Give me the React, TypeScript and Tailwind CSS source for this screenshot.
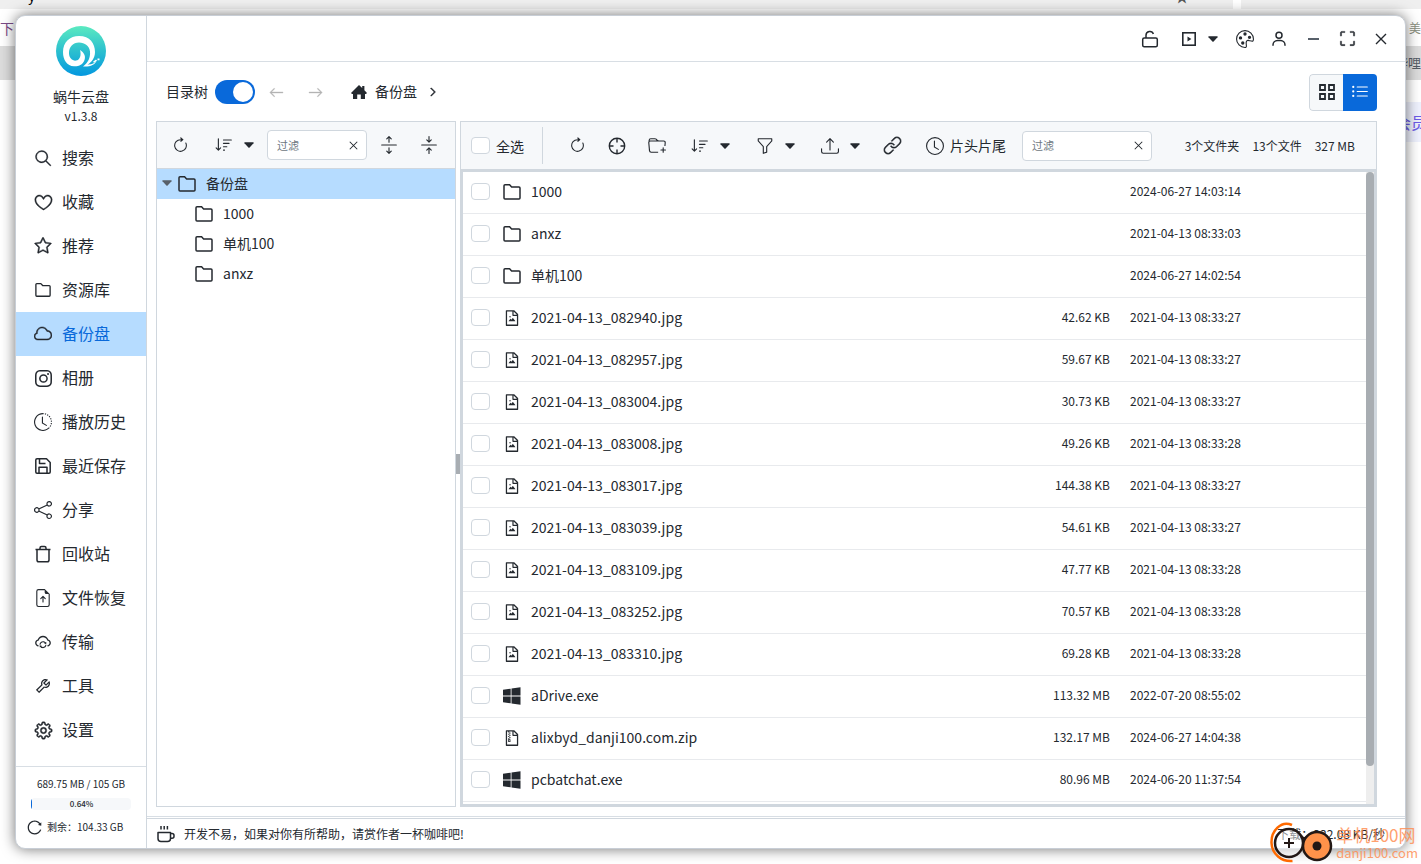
import { useState } from "react";
import type { ReactNode } from "react";
import {
  BsArrowClockwise, BsArrowLeft, BsArrowRight, BsArrowsCollapse, BsArrowsExpand,
  BsChevronRight, BsClock, BsClockHistory, BsFileEarmarkArrowUp, BsFolderPlus,
  BsFunnel, BsInstagram, BsListUl, BsPalette, BsShare, BsSortDown, BsUpload,
} from "react-icons/bs";
import { GoCloud, GoGear, GoHeart, GoLink, GoScreenFull, GoSearch, GoStar } from "react-icons/go";
import { BiUser } from "react-icons/bi";
import {
  AiOutlineCloudSync, AiOutlineFileImage, AiOutlineFileZip, AiOutlineReload, AiOutlineTool,
} from "react-icons/ai";

function LineIcon({ size = 18, weight = 1.5, children }: { size?: number; weight?: number; children: ReactNode }) {
  return (
    <svg width={size} height={size} viewBox="0 0 18 18" fill="none" stroke="currentColor" strokeWidth={weight} strokeLinejoin="round">
      {children}
    </svg>
  );
}

function FolderIcon({ size = 18 }: { size?: number }) {
  return (
    <LineIcon size={size}>
      <path d="M2 1.800h4.600l2 2.200H16q1 0 1 1v10q0 1-1 1H2q-1 0-1-1V2.800q0-1 1-1z" />
    </LineIcon>
  );
}

function SaveIcon() {
  return (
    <LineIcon>
      <path d="M3 1.800h9.500l3.700 3.700V15q0 1.200-1.200 1.200H3Q1.800 16.200 1.800 15V3Q1.800 1.800 3 1.800z" />
      <path d="M5.500 2v4.500h6M5 16v-5.800h8V16" />
    </LineIcon>
  );
}

function TrashIcon() {
  return (
    <LineIcon>
      <path d="M1.500 4.500h15M3 4.500V15q0 1.800 1.800 1.800h8.400Q15 16.800 15 15V4.500M6 4.500V3q0-1.500 1.500-1.500h3Q12 1.500 12 3v1.500" />
    </LineIcon>
  );
}

function TargetIcon() {
  return (
    <LineIcon weight={1.4}>
      <circle cx="9" cy="9" r="7.700" />
      <path d="M9 1.500v4M9 12.500v4M1.500 9h4M12.500 9h4" />
    </LineIcon>
  );
}

function UnlockIcon() {
  return (
    <LineIcon>
      <rect x="1.700" y="8" width="14.600" height="8.700" rx="1.500" />
      <path d="M5 8V5.200a3.800 3.800 0 0 1 7.400-1.200" />
    </LineIcon>
  );
}

function GridIcon() {
  return (
    <LineIcon size={18} weight={1.8}>
      <path d="M2 2h5v5H2zM11 2h5v5h-5zM2 11h5v5H2zM11 11h5v5h-5z" strokeLinejoin="miter" />
    </LineIcon>
  );
}

function CoffeeIcon() {
  return (
    <LineIcon>
      <path d="M1 7.500h12.500v6q0 3-3 3H4q-3 0-3-3zM13.500 8.500H15q2 0 2 2v.8q0 2-2 2h-1.500" />
      <path d="M4 1v3.500M7.200 1v3.500M10.400 1v3.500" />
    </LineIcon>
  );
}

function HomeIcon() {
  return (
    <svg width="16" height="16" viewBox="0 0 16 16" fill="currentColor">
      <path d="M8 1l3.200 3.100V2h2.200v4.300L16 9l-1 .9h-1V15H9.800v-4.500H6.200V15H2V9.900H1L0 9z" />
    </svg>
  );
}

function WindowsIcon() {
  return (
    <svg width="18" height="18" viewBox="0 0 18 18" fill="currentColor">
      <path d="M0 2.700l7.700-1v6.900H0zM8.500 1.500L17.500.3v8.300h-9zM0 9.400h7.700v6.900L0 15.300zM8.500 9.400h9v8.300l-9-1.200z" />
    </svg>
  );
}

function Caret() {
  return (
    <svg width="10" height="6" viewBox="0 0 10 6" fill="currentColor">
      <path d="M.8.300h8.400q.8.100.3.900L5.600 5.400q-.6.500-1.200 0L.5 1.200Q0 .4.800.300z" />
    </svg>
  );
}

function CloseIcon({ size }: { size: number }) {
  return (
    <svg width={size} height={size} viewBox="0 0 12 12" fill="none" stroke="currentColor" strokeWidth="1.4">
      <path d="M1 1l10 10M11 1L1 11" />
    </svg>
  );
}

function PlayBoxIcon() {
  return (
    <svg width="14" height="14" viewBox="0 0 14 14" fill="none" stroke="currentColor" strokeWidth="1.6">
      <rect x="0.8" y="0.8" width="12.4" height="12.4" />
      <path d="M5.500 4.400v5.200L9.400 7z" fill="currentColor" stroke="none" />
    </svg>
  );
}

function SnailLogo() {
  return (
    <svg width="50" height="50" viewBox="0 0 50 50">
      <defs>
        <linearGradient id="logo" x1="0" y1="0" x2="0" y2="1">
          <stop offset="0" stopColor="#5beac0" />
          <stop offset="0.5" stopColor="#2cc0cf" />
          <stop offset="1" stopColor="#0397df" />
        </linearGradient>
      </defs>
      <circle cx="25" cy="25" r="25" fill="url(#logo)" />
      <path
        d="M24 24C28 26.500 30 30 28.500 34 27 38.500 23 40.500 18 40.300 11 40 7 34 7 26 7 16 14 10 23 10c11 0 16 7.500 16 16 0 6-3.500 10.500-7.500 12.500 4 .3 7.500-1.500 9-4-1.500 4.500-6.500 6.500-13.500 6 5-3.500 7.500-9 7-15-.6-5.500-5-9-11-9-6 0-10 4.500-10 10.500 0 5 3.500 8 7 7.600C24 34 25.500 29 24 24z"
        fill="#fff"
      />
      <path d="M37 35.800l3-2.300 1 1.300-3 2zM41.500 32.500h2v1.800h-2z" fill="#fff" />
    </svg>
  );
}

const navItems: { label: string; icon: ReactNode }[] = [
  { label: "搜索", icon: <GoSearch size={18} strokeWidth={0.5} /> },
  { label: "收藏", icon: <GoHeart size={19} strokeWidth={0.5} /> },
  { label: "推荐", icon: <GoStar size={18} strokeWidth={0.6} /> },
  { label: "资源库", icon: <FolderIcon size={16} /> },
  { label: "备份盘", icon: <GoCloud size={18} strokeWidth={0.6} /> },
  { label: "相册", icon: <BsInstagram size={17} /> },
  { label: "播放历史", icon: <BsClockHistory size={18} /> },
  { label: "最近保存", icon: <SaveIcon /> },
  { label: "分享", icon: <BsShare size={18} /> },
  { label: "回收站", icon: <TrashIcon /> },
  { label: "文件恢复", icon: <BsFileEarmarkArrowUp size={18} /> },
  { label: "传输", icon: <AiOutlineCloudSync size={18} /> },
  { label: "工具", icon: <AiOutlineTool size={18} /> },
  { label: "设置", icon: <GoGear size={19} strokeWidth={0.6} /> },
];

type FileKind = "folder" | "image" | "exe" | "zip";

const files: { kind: FileKind; name: string; size: string; date: string }[] = [
  { kind: "folder", name: "1000", size: "", date: "2024-06-27 14:03:14" },
  { kind: "folder", name: "anxz", size: "", date: "2021-04-13 08:33:03" },
  { kind: "folder", name: "单机100", size: "", date: "2024-06-27 14:02:54" },
  { kind: "image", name: "2021-04-13_082940.jpg", size: "42.62 KB", date: "2021-04-13 08:33:27" },
  { kind: "image", name: "2021-04-13_082957.jpg", size: "59.67 KB", date: "2021-04-13 08:33:27" },
  { kind: "image", name: "2021-04-13_083004.jpg", size: "30.73 KB", date: "2021-04-13 08:33:27" },
  { kind: "image", name: "2021-04-13_083008.jpg", size: "49.26 KB", date: "2021-04-13 08:33:28" },
  { kind: "image", name: "2021-04-13_083017.jpg", size: "144.38 KB", date: "2021-04-13 08:33:27" },
  { kind: "image", name: "2021-04-13_083039.jpg", size: "54.61 KB", date: "2021-04-13 08:33:27" },
  { kind: "image", name: "2021-04-13_083109.jpg", size: "47.77 KB", date: "2021-04-13 08:33:28" },
  { kind: "image", name: "2021-04-13_083252.jpg", size: "70.57 KB", date: "2021-04-13 08:33:28" },
  { kind: "image", name: "2021-04-13_083310.jpg", size: "69.28 KB", date: "2021-04-13 08:33:28" },
  { kind: "exe", name: "aDrive.exe", size: "113.32 MB", date: "2022-07-20 08:55:02" },
  { kind: "zip", name: "alixbyd_danji100.com.zip", size: "132.17 MB", date: "2024-06-27 14:04:38" },
  { kind: "exe", name: "pcbatchat.exe", size: "80.96 MB", date: "2024-06-20 11:37:54" },
];

const fileIcons: Record<FileKind, ReactNode> = {
  folder: <FolderIcon />,
  image: <AiOutlineFileImage size={18} />,
  exe: <WindowsIcon />,
  zip: <AiOutlineFileZip size={18} />,
};

function ToolButton({ label, wide, children }: { label: string; wide?: boolean; children: ReactNode }) {
  return (
    <button
      type="button"
      aria-label={label}
      className={wide ? "flex h-[30px] w-[54px] shrink-0 items-center justify-center gap-[11px]" : "flex h-[30px] w-10 shrink-0 items-center justify-center"}
    >
      {children}
      {wide && <Caret />}
    </button>
  );
}

function FilterBox({ id, wide }: { id: string; wide?: boolean }) {
  const [value, setValue] = useState("");
  return (
    <div className={`flex h-[30px] shrink-0 items-center rounded border border-[#d0d7de] bg-white pr-2 pl-[9px] ${wide ? "w-[130px]" : "w-[100px]"}`}>
      <input
        id={id}
        aria-label="过滤"
        placeholder="过滤"
        value={value}
        onChange={(e) => setValue(e.target.value)}
        className="min-w-0 flex-1 bg-transparent text-[11px] outline-none placeholder:text-[#6e7781]"
      />
      <button type="button" aria-label="清除" onClick={() => setValue("")}>
        <CloseIcon size={9} />
      </button>
    </div>
  );
}

const checkboxClass =
  "block h-[17px] w-[19px] shrink-0 appearance-none rounded border border-[#d0d7de] bg-white checked:border-[#0969da] checked:bg-[#0969da]";

function Backdrop() {
  return (
    <div aria-hidden="true" className="absolute inset-0 overflow-hidden bg-white">
      <div className="h-[9px] bg-[#efefef]" />
      <span className="absolute -top-[15px] left-7 text-sm text-black">y</span>
      <span className="absolute -top-3.5 left-[1175px] text-sm text-[#555555]">★</span>
      <span className="absolute top-0 left-[1233px] h-[9px] w-2 bg-white" />
      <span className="absolute top-[18px] left-0 text-sm text-[#7a4a86]">下</span>
      <span className="absolute top-[46px] left-0 h-[34px] w-4 bg-[#dcdcdc]" />
      <span className="absolute top-5 right-0 text-xs text-[#8a8f80]">美</span>
      <span className="absolute top-[46px] right-0 flex h-[34px] w-[26px] items-center justify-end bg-[#dcdcdc] text-[13px] whitespace-nowrap text-[#555d66]">哔哩</span>
      <span className="absolute top-[102px] right-0 flex h-10 w-[26px] items-center bg-[#eef1fd] text-base whitespace-nowrap text-[#6c5ce7]">会员</span>
    </div>
  );
}

function Sidebar() {
  return (
    <aside className="flex w-[131px] shrink-0 flex-col border-r border-[#d0d7de]">
      <div className="flex h-[120px] shrink-0 flex-col items-center pt-2.5">
        <SnailLogo />
        <div className="mt-2.5 text-sm leading-5">蜗牛云盘</div>
        <div className="text-xs leading-5">v1.3.8</div>
      </div>
      <nav className="flex min-h-0 flex-1 flex-col overflow-hidden">
        {navItems.map((item) => {
          const active = item.label === "备份盘";
          return (
            <a
              key={item.label}
              href="#"
              aria-current={active ? "page" : undefined}
              className={`flex h-11 shrink-0 items-center gap-2 pl-4 ${active ? "bg-[#b6dcff]" : ""}`}
            >
              <span className="flex w-[22px] justify-center">{item.icon}</span>
              <span className={`pb-0.5 text-base ${active ? "text-[#0969da]" : ""}`}>{item.label}</span>
            </a>
          );
        })}
      </nav>
      <div className="shrink-0 border-t border-[#d8dee4] pt-[9px] pb-3">
        <div className="text-center text-[10px] leading-4">689.75 MB / 105 GB</div>
        <div className="mx-[15px] mt-1.5 flex h-3 items-center overflow-hidden rounded bg-[#f6f8fa] text-[8px] font-medium">
          <span className="h-full w-px bg-[#0969da]" />
          <span className="flex-1 text-center">0.64%</span>
        </div>
        <div className="mt-2 flex items-center gap-1 pl-2.5 text-[10px] leading-[18px]">
          <button type="button" aria-label="刷新容量">
            <AiOutlineReload size={17} />
          </button>
          <span>剩余：104.33 GB</span>
        </div>
      </div>
    </aside>
  );
}

function TitleBar() {
  const cell = "flex h-8 w-[34px] items-center justify-center";
  return (
    <header className="flex h-[46px] shrink-0 items-center justify-end border-b border-[#d8dee4] pr-[7px]">
      <button type="button" aria-label="解锁" className={cell}><UnlockIcon /></button>
      <button type="button" aria-label="播放" className="flex h-8 w-[61px] items-center justify-center gap-3 pl-1">
        <PlayBoxIcon />
        <Caret />
      </button>
      <button type="button" aria-label="主题" className={cell}><BsPalette size={18} /></button>
      <button type="button" aria-label="用户" className={cell}><BiUser size={18} /></button>
      <button type="button" aria-label="最小化" className={cell}>
        <span className="h-0.5 w-[11px] bg-[#57606a]" />
      </button>
      <button type="button" aria-label="最大化" className={cell}><GoScreenFull size={19} strokeWidth={0.6} /></button>
      <button type="button" aria-label="关闭" className={cell}><CloseIcon size={12} /></button>
    </header>
  );
}

function PathBar() {
  const [treeOn, setTreeOn] = useState(true);
  return (
    <div className="flex h-[59px] shrink-0 items-center pt-px pr-7 pl-[19px]">
      <label htmlFor="tree-toggle" className="pb-0.5 text-sm">目录树</label>
      <input
        id="tree-toggle"
        type="checkbox"
        role="switch"
        checked={treeOn}
        onChange={() => setTreeOn(!treeOn)}
        className="ml-[7px] flex h-6 w-10 appearance-none items-center rounded-full bg-[#8c959f] px-0.5 before:size-5 before:rounded-full before:bg-white checked:justify-end checked:bg-[#0969da]"
      />
      <button type="button" aria-label="后退" className="ml-3.5 text-[#b4b4b4]"><BsArrowLeft size={15} strokeWidth={0.4} /></button>
      <button type="button" aria-label="前进" className="ml-6 text-[#b4b4b4]"><BsArrowRight size={15} strokeWidth={0.4} /></button>
      <button type="button" aria-label="首页" className="ml-7"><HomeIcon /></button>
      <a href="#" className="ml-2 pb-0.5 text-sm">备份盘</a>
      <BsChevronRight size={10} strokeWidth={1.5} className="ml-[11px]" />
      <div className="ml-auto flex h-[37px] overflow-hidden rounded">
        <button type="button" aria-label="网格视图" className="flex w-[34px] items-center justify-center rounded-l border border-r-0 border-[#d0d7de] bg-[#f6f8fa]"><GridIcon /></button>
        <button type="button" aria-label="列表视图" className="flex w-[34px] items-center justify-center bg-[#0969da] text-white"><BsListUl size={18} /></button>
      </div>
    </div>
  );
}

function TreePanel() {
  return (
    <section aria-label="目录树" className="flex w-[300px] shrink-0 flex-col border border-[#d0d7de]">
      <div className="flex h-[47px] shrink-0 items-center border-b border-[#d0d7de] bg-[#f6f8fa] pl-[3px]">
        <ToolButton label="刷新目录"><BsArrowClockwise size={17} /></ToolButton>
        <span className="w-[7px]" />
        <ToolButton label="目录排序" wide><BsSortDown size={18} /></ToolButton>
        <span className="w-1.5" />
        <FilterBox id="tree-filter" />
        <span className="w-0.5" />
        <ToolButton label="全部展开"><BsArrowsExpand size={18} /></ToolButton>
        <ToolButton label="全部折叠"><BsArrowsCollapse size={18} /></ToolButton>
      </div>
      <ul role="tree" className="text-sm">
        <li role="treeitem" aria-expanded="true">
          <div className="flex h-[30px] items-center bg-[#b6dcff] pl-[5px]">
            <span className="pb-0.5 text-[#57606a]"><Caret /></span>
            <span className="ml-1.5 flex"><FolderIcon /></span>
            <span className="ml-2.5 pb-0.5">备份盘</span>
          </div>
          <ul role="group">
            {["1000", "单机100", "anxz"].map((name) => (
              <li key={name} role="treeitem" className="flex h-[30px] items-center gap-2.5 pl-[38px]">
                <FolderIcon />
                <span className="pb-0.5">{name}</span>
              </li>
            ))}
          </ul>
        </li>
      </ul>
    </section>
  );
}

function ListPanel() {
  const cell = "border-b border-[#e8eaed] p-0";
  return (
    <section aria-label="文件列表" className="flex min-w-0 flex-1 flex-col">
      <div className="flex h-[48px] shrink-0 items-center border border-b-0 border-[#d0d7de] bg-[#f6f8fa] pr-[21px] pl-2.5">
        <input id="select-all" type="checkbox" className={checkboxClass} />
        <label htmlFor="select-all" className="ml-1.5 shrink-0 text-sm">全选</label>
        <span className="mr-3.5 ml-[18px] h-[37px] w-px bg-[#d0d7de]" />
        <ToolButton label="刷新"><BsArrowClockwise size={17} /></ToolButton>
        <ToolButton label="定位"><TargetIcon /></ToolButton>
        <ToolButton label="新建文件夹"><BsFolderPlus size={18} /></ToolButton>
        <span className="w-1.5" />
        <ToolButton label="排序" wide><BsSortDown size={18} /></ToolButton>
        <span className="w-[11px]" />
        <ToolButton label="筛选" wide><BsFunnel size={18} /></ToolButton>
        <span className="w-[11px]" />
        <ToolButton label="上传" wide><BsUpload size={18} /></ToolButton>
        <span className="w-[5px]" />
        <ToolButton label="链接"><GoLink size={19} strokeWidth={0.5} /></ToolButton>
        <button type="button" className="ml-3.5 flex shrink-0 items-center gap-1.5 text-sm">
          <BsClock size={18} />
          <span className="pb-0.5">片头片尾</span>
        </button>
        <span className="w-4" />
        <FilterBox id="list-filter" wide />
        <div className="ml-auto flex shrink-0 gap-[13px] text-xs">
          <span>3个文件夹</span>
          <span>13个文件</span>
          <span>327 MB</span>
        </div>
      </div>
      <div className="flex min-h-0 flex-1 border-3 border-[#d0d7de]">
        <div className="min-w-0 flex-1 overflow-hidden">
          <table className="w-full border-separate border-spacing-0">
            <tbody>
              {files.map((file, i) => (
                <tr key={file.name} className="h-[42px]">
                  <td className={`${cell} w-[37px]`}>
                    <input type="checkbox" aria-labelledby={`file-${i}`} className={`${checkboxClass} mb-0.5 ml-2`} />
                  </td>
                  <td className={`${cell} w-[31px]`}>
                    <span className="flex w-6 justify-center pb-0.5">{fileIcons[file.kind]}</span>
                  </td>
                  <td className={cell}>
                    <div id={`file-${i}`} className="pb-1 text-sm">{file.name}</div>
                  </td>
                  <td className={`${cell} w-24`}>
                    <div className="pb-1 text-right text-xs">{file.size}</div>
                  </td>
                  <td className={`${cell} w-64`}>
                    <div className="pb-1 pl-5 text-xs">{file.date}</div>
                  </td>
                </tr>
              ))}
            </tbody>
          </table>
        </div>
        <div className="w-2 shrink-0 bg-[#eeeeee]">
          <div className="h-[94%] rounded-full bg-[#a8adb2]" />
        </div>
      </div>
    </section>
  );
}

function StatusBar() {
  return (
    <footer className="mt-px flex h-[30px] shrink-0 items-center border-t border-[#d0d7de] pr-5 pl-2.5 text-xs">
      <CoffeeIcon />
      <span className="ml-[9px]">开发不易，如果对你有所帮助，请赏作者一杯咖啡吧!</span>
      <span className="ml-auto">下载：332.08 KB/秒</span>
    </footer>
  );
}

function Watermark() {
  return (
    <div className="pointer-events-none absolute right-[3px] bottom-0 flex items-center text-[#ff8a4c]">
      <svg width="66" height="42" viewBox="0 0 66 42" fill="none">
        <path d="M22 3C11-2 1 9 1.500 21c.5 11 10 19 21 18" stroke="#ff6a00" strokeWidth="2.500" />
        <circle cx="19" cy="21" r="14" fill="#fff" fillOpacity="0.5" stroke="#231815" strokeWidth="2.500" />
        <path d="M19 16v10M14 21h10" stroke="#231815" strokeWidth="2" />
        <path d="M31 14q3 4 6 1" stroke="#231815" strokeWidth="2.500" />
        <circle cx="47" cy="24" r="14" fill="#ff924a" stroke="#231815" strokeWidth="2.500" />
        <circle cx="47" cy="24" r="4.500" fill="#231815" />
      </svg>
      <div className="opacity-80">
        <div className="text-[17px] leading-[19px]">单机100网</div>
        <div className="text-[13px] leading-[18px]">danji100.com</div>
      </div>
    </div>
  );
}

export default function App() {
  return (
    <div className="relative h-screen w-full overflow-hidden p-[15px] font-['Noto_Sans_CJK_SC',sans-serif] text-[#24292f]">
      <Backdrop />
      <div className="relative flex h-full overflow-hidden rounded-[10px] border border-[#c8ced6] bg-white shadow-[0_0_14px_rgba(0,0,0,0.55)]">
        <Sidebar />
        <div className="flex min-w-0 flex-1 flex-col">
          <TitleBar />
          <PathBar />
          <main className="flex min-h-0 flex-1 border-b border-[#d8dee4] pr-7 pb-[9px] pl-[9px]">
            <TreePanel />
            <div role="separator" aria-orientation="vertical" className="flex w-1 shrink-0 items-center">
              <span className="h-5 w-1 bg-[#a8adb2]" />
            </div>
            <ListPanel />
          </main>
          <StatusBar />
        </div>
      </div>
      <Watermark />
    </div>
  );
}
